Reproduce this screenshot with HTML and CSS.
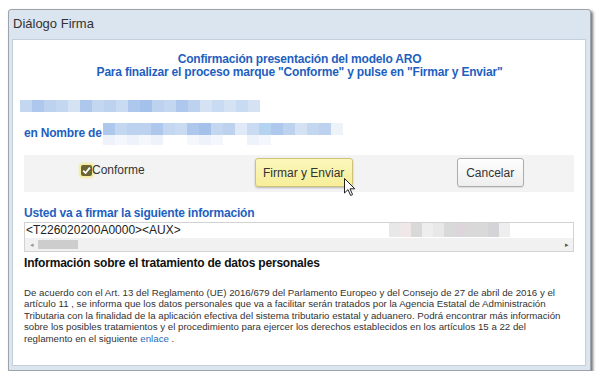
FILE: index.html
```html
<!DOCTYPE html>
<html lang="es">
<head>
<meta charset="utf-8">
<title>Diálogo Firma</title>
<link rel="stylesheet" href="styles.css">
</head>
<body>
<div class="dialog">
  <div class="titlebar">Diálogo Firma</div>
  <div class="content">
    <div class="heading">
      <div>Confirmación presentación del modelo ARO</div>
      <div>Para finalizar el proceso marque "Conforme" y pulse en "Firmar y Enviar"</div>
    </div>
    <div class="blur blur-line1">
      <span class="b1"></span><span class="b2"></span><span class="b3"></span><span class="b1"></span><span class="b4"></span><span class="b2"></span><span class="b1"></span><span class="b3"></span><span class="b5"></span><span class="b2"></span><span class="b6"></span><span class="b3"></span><span class="b1"></span><span class="b2"></span><span class="b3"></span><span class="b4"></span><span class="b5"></span><span class="b4"></span><span class="b5"></span><span class="b4"></span>
    </div>
    <div class="nombre">
      <span class="label">en Nombre de</span>
      <span class="blur-name">
        <span class="row top"><span class="b2"></span><span class="b1"></span><span class="b3"></span><span class="b3"></span><span class="b2"></span><span class="b1"></span><span class="b5"></span><span class="b2"></span><span class="b6"></span><span class="b1"></span><span class="b3"></span><span class="b7"></span><span class="b5"></span><span class="b8"></span><span class="b2"></span><span class="b3"></span><span class="b4"></span><span class="b1"></span><span class="b3"></span><span class="b9"></span></span>
        <span class="row bot"><span class="c1"></span><span class="c2"></span><span class="c1"></span><span class="c2"></span><span class="c1"></span><span class="c0"></span><span class="c0"></span><span class="c2"></span><span class="c1"></span><span class="c2"></span><span class="c0"></span><span class="c0"></span><span class="c1"></span><span class="c2"></span><span class="c0"></span><span class="c0"></span><span class="c0"></span><span class="c0"></span><span class="c0"></span><span class="c0"></span></span>
      </span>
    </div>
    <div class="band">
      <label class="check">
        <span class="box"><svg width="11" height="11" viewBox="0 0 11 11"><path d="M2.2 5.6 L4.5 8 L8.9 2.6" fill="none" stroke="#fff" stroke-width="1.8"/></svg></span>Conforme
      </label>
      <button class="btn btn-yellow">Firmar y Enviar</button>
      <button class="btn btn-gray">Cancelar</button>
      <svg class="cursor" width="12" height="19" viewBox="0 0 12 19"><path d="M0.5 0.5 L0.5 15 L4 11.6 L6.6 17.5 L8.6 16.6 L6 10.8 L10.8 10.8 Z" fill="#fff" stroke="#222" stroke-width="1"/></svg>
    </div>
    <div class="sub">Usted va a firmar la siguiente información</div>
    <div class="textbox">
      <div class="textline">&lt;T226020200A0000&gt;&lt;AUX&gt;<span class="gblur"><span class="g1"></span><span class="g2"></span><span class="g3"></span><span class="g4"></span><span class="g1"></span><span class="g3"></span><span class="g5"></span><span class="g3"></span><span class="g3"></span><span class="g6"></span><span class="g4"></span></span></div>
      <div class="hscroll">
        <span class="arr">&#9666;</span>
        <span class="track"><span class="thumb"></span></span>
        <span class="arr">&#9656;</span>
      </div>
    </div>
    <div class="info">Información sobre el tratamiento de datos personales</div>
    <p class="legal">De acuerdo con el Art. 13 del Reglamento (UE) 2016/679 del Parlamento Europeo y del Consejo de 27 de abril de 2016 y el artículo 11 , se informa que los datos personales que va a facilitar serán tratados por la Agencia Estatal de Administración Tributaria con la finalidad de la aplicación efectiva del sistema tributario estatal y aduanero. Podrá encontrar más información sobre los posibles tratamientos y el procedimiento para ejercer los derechos establecidos en los artículos 15 a 22 del reglamento en el siguiente <a href="#">enlace</a> .</p>
  </div>
</div>
</body>
</html>
```

FILE: styles.css
```css
* { box-sizing: border-box; }
body {
  margin: 0;
  background: #fff;
  font-family: "Liberation Sans", Arial, sans-serif;
}
.dialog {
  margin: 9px 0 0 8px;
  width: 583px;
  height: 362px;
  border: 1px solid #9da3a9;
  border-radius: 3px 3px 0 0;
  background: #dbe5ef;
  padding: 0 4px 4px 3px;
  box-shadow: 2px 2px 3px rgba(0,0,0,0.55);
  display: flex;
  flex-direction: column;
}
.titlebar {
  height: 29px;
  line-height: 28px;
  font-size: 13px;
  color: #333;
  padding-left: 1px;
}
.content {
  flex: 1;
  background: #fff;
  border: 1px solid #c3d0dc;
  padding: 13px 10px 0 11px;
  position: relative;
}
.heading {
  text-align: center;
  color: #1e5fc0;
  font-weight: bold;
  font-size: 12px;
  line-height: 13px;
  letter-spacing: -0.2px;
}
.blur {
  display: flex;
  height: 12px;
  margin: 21px 0 0 -4px;
}
.blur span, .row span { width: 12px; height: 100%; flex: none; }
.b1 { background: #c4d7f0; }
.b2 { background: #adc8ec; }
.b3 { background: #bcd2ef; }
.b4 { background: #d4e2f4; }
.b5 { background: #c9dbf2; }
.b6 { background: #a3c1ea; }
.b7 { background: #e0eaf7; }
.b8 { background: #b3d3f0; }
.b9 { background: #eef3fa; }
.c0 { background: #fff; }
.c1 { background: #eef3fb; }
.c2 { background: #f4f7fc; }
.nombre {
  display: flex;
  align-items: flex-start;
  margin-top: 11px;
}
.nombre .label {
  color: #1e5fc0;
  font-weight: bold;
  font-size: 12px;
  line-height: 13px;
  letter-spacing: -0.2px;
  margin-top: 4px;
  width: 79px;
  white-space: nowrap;
  flex: none;
}
.blur-name { display: flex; flex-direction: column; }
.row { display: flex; }
.row.top { height: 12px; }
.row.bot { height: 10px; }
.band {
  position: relative;
  margin-top: 10px;
  width: 550px;
  height: 37px;
  background: #f3f3f3;
  display: flex;
  align-items: flex-start;
}
.check {
  display: flex;
  align-items: center;
  font-size: 12px;
  color: #333;
  margin: 8px 0 0 57px;
}
.box {
  width: 11px;
  height: 11px;
  background: #6a6534;
  border-radius: 2px;
  box-shadow: 0 0 2px 2px #f4ec9c;
  display: inline-flex;
}
.btn {
  font-family: "Liberation Sans", Arial, sans-serif;
  font-size: 12px;
  color: #333;
  height: 29px;
  border-radius: 3px;
  margin-top: 3px;
  padding: 0;
}
.btn-yellow {
  width: 98px;
  margin-left: 110px;
  background: linear-gradient(#fcf7bb, #f6ee99);
  border: 1px solid #cfc27a;
  box-shadow: 0 1px 2px rgba(0,0,0,0.25);
}
.btn-gray {
  width: 67px;
  margin-left: 104px;
  background: linear-gradient(#fefefe, #eeeeee);
  border: 1px solid #adadad;
  box-shadow: 0 1px 1px rgba(0,0,0,0.1);
}
.cursor {
  position: absolute;
  left: 320px;
  top: 23px;
}
.sub {
  color: #1e5fc0;
  font-weight: bold;
  font-size: 12px;
  line-height: 13px;
  letter-spacing: -0.2px;
  margin-top: 15px;
}
.textbox {
  width: 550px;
  height: 30px;
  border: 1px solid #d2d2d2;
  margin-top: 2px;
}
.textline {
  height: 15px;
  font-size: 12px;
  line-height: 14px;
  color: #222;
  padding-left: 1px;
  position: relative;
}
.gblur {
  position: absolute;
  left: 364px;
  top: 0;
  height: 14px;
  display: flex;
}
.gblur span { width: 11px; height: 100%; }
.g1 { background: #e8e8e8; }
.g2 { background: #f0e8e8; }
.g3 { background: #d9d9d9; }
.g4 { background: #eeeeee; }
.g5 { background: #dcd6dc; }
.g6 { background: #d4d3d8; }
.hscroll {
  height: 13px;
  background: #f1f1f1;
  display: flex;
  align-items: center;
  font-size: 7px;
  color: #999;
}
.hscroll .arr { width: 13px; text-align: center; }
.hscroll .arr:last-child { color: #555; }
.track { flex: 1; height: 100%; display: flex; align-items: center; }
.thumb { width: 40px; height: 9px; background: #cdcdcd; }
.info {
  font-weight: bold;
  font-size: 12px;
  line-height: 13px;
  letter-spacing: -0.2px;
  color: #111;
  margin-top: 5px;
}
.legal {
  margin: 17px 0 0;
  font-size: 9.7px;
  line-height: 11.4px;
  color: #333;
  width: 550px;
}
.legal a { color: #2a6bb8; text-decoration: none; }
```
